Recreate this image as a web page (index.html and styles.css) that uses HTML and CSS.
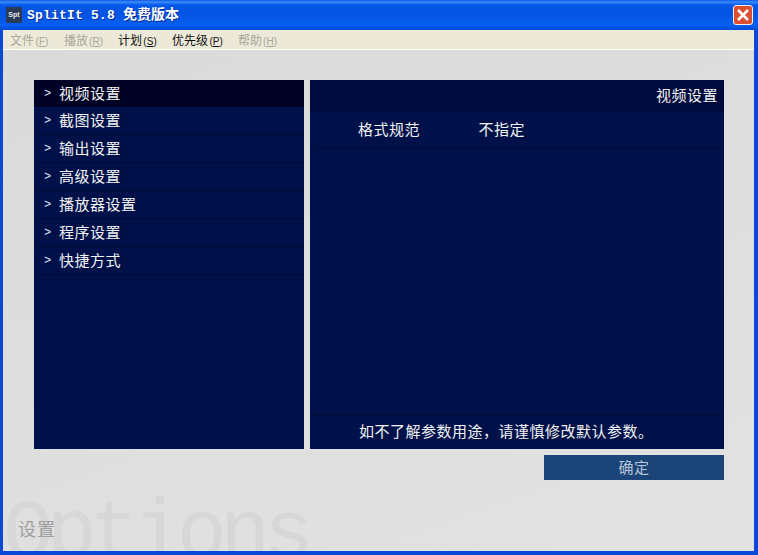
FILE: index.html
```html
<!DOCTYPE html>
<html lang="zh">
<head>
<meta charset="utf-8">
<title>SplitIt 5.8</title>
<link rel="stylesheet" href="styles.css">
</head>
<body>
<div class="window">
  <header class="titlebar">
    <div class="app-icon">Spt</div>
    <div class="title">SplitIt 5.8 <span class="title-cjk">免费版本</span></div>
    <button class="close" aria-label="关闭">
      <svg width="14" height="14" viewBox="0 0 14 14"><path d="M2 2 12 12M12 2 2 12" stroke="#fff" stroke-width="2.6" fill="none"/></svg>
    </button>
  </header>
  <div class="frame">
    <nav class="menubar">
      <span class="menu off">文件<span class="hot">(<u>F</u>)</span></span>
      <span class="menu off">播放<span class="hot">(<u>R</u>)</span></span>
      <span class="menu">计划<span class="hot">(<u>S</u>)</span></span>
      <span class="menu">优先级<span class="hot">(<u>P</u>)</span></span>
      <span class="menu off">帮助<span class="hot">(<u>H</u>)</span></span>
    </nav>
    <main class="client">
      <div class="watermark">Options</div>
      <div class="panels">
        <ul class="side">
          <li class="item active"><span class="arrow">&gt;</span>视频设置</li>
          <li class="item"><span class="arrow">&gt;</span>截图设置</li>
          <li class="item"><span class="arrow">&gt;</span>输出设置</li>
          <li class="item"><span class="arrow">&gt;</span>高级设置</li>
          <li class="item"><span class="arrow">&gt;</span>播放器设置</li>
          <li class="item"><span class="arrow">&gt;</span>程序设置</li>
          <li class="item"><span class="arrow">&gt;</span>快捷方式</li>
        </ul>
        <section class="detail">
          <div class="detail-head">视频设置</div>
          <div class="detail-row"><span class="key">格式规范</span><span>不指定</span></div>
          <div class="detail-body"></div>
          <div class="detail-foot">如不了解参数用途，请谨慎修改默认参数。</div>
        </section>
      </div>
      <div class="actions"><button class="ok">确定</button></div>
      <div class="caption">设置</div>
    </main>
  </div>
</div>
</body>
</html>
```
FILE: styles.css
```css
* { box-sizing: border-box; }
html, body { margin: 0; padding: 0; }
body { width: 758px; height: 555px; overflow: hidden; font-family: "Noto Sans CJK SC", "Liberation Sans", sans-serif; }
.window { width: 758px; height: 555px; display: flex; flex-direction: column; background: #0a49d8; }
.titlebar {
  height: 30px; flex: none; display: flex; align-items: center; padding: 0 5px 0 6px; gap: 5px;
  background: linear-gradient(#0a5ae6 0, #3a8cf8 2px, #0558ea 5px, #0353e4 14px, #0560f0 25px, #0449d4 30px);
}
.app-icon {
  width: 16px; height: 16px; background: #2b3b55; color: #e6e6e6;
  font: bold 7px/16px "Liberation Sans", sans-serif; text-align: center;
}
.title {
  flex: 1; color: #fff; font: bold 13px/18px "Liberation Mono", "Noto Sans CJK SC", monospace;
  letter-spacing: 0.2px; text-shadow: 1px 1px 0 #0a2c90; white-space: pre;
}
.title-cjk { font-size: 14px; letter-spacing: 0; }
.close {
  width: 20px; height: 20px; padding: 0; display: flex; align-items: center; justify-content: center;
  background: #d9502f; border: 1px solid #f2f2f2; border-radius: 3px;
}
.frame { flex: 1; min-height: 0; display: flex; flex-direction: column; margin: 0 4px 4px 3px; }
.menubar {
  height: 20px; flex: none; display: flex; padding-left: 7px; gap: 14px; background: #ece9d8;
  border-bottom: 1px solid #fff; font-size: 12px; line-height: 19px; color: #111;
}
.menu.off { color: #a8a69a; }
.hot { display: inline-block; width: 16px; text-align: center; font: 10px/19px "Liberation Sans", sans-serif; }
.client {
  flex: 1; position: relative; overflow: hidden; padding: 30px 30px 0 31px; display: flex; flex-direction: column;
  background: linear-gradient(160deg, #dadada, #e2e2e2);
}
.watermark {
  position: absolute; left: 0; top: 435px; font: 84px/100px "Liberation Mono", monospace;
  letter-spacing: -7px; color: #d7d7d7;
}
.panels { position: relative; display: flex; gap: 6px; height: 369px; flex: none; }
.side { width: 270px; margin: 0; padding: 0; list-style: none; background: #00114a; }
.item {
  height: 28px; display: flex; align-items: center; padding: 0 0 2px 10px; color: #f2f2f2; font-size: 15px;
  letter-spacing: 0.5px; border-bottom: 1px solid #000c36;
}
.item.active { height: 27px; background: #000225; border-bottom: 0; }
.arrow { width: 15px; font: 12px/16px "Liberation Mono", monospace; color: #dfe8ff; padding-top: 2px; }
.detail { flex: 1; display: flex; flex-direction: column; background: #00114a; color: #f2f2f2; font-size: 15px; letter-spacing: 0.5px; }
.detail-head { height: 32px; flex: none; background: #000a3c; text-align: right; padding-right: 6px; line-height: 30px; }
.detail-row {
  height: 36px; flex: none; display: flex; align-items: center; margin: 0 2px 0 8px; padding: 0 0 2px 40px;
  border-bottom: 1px solid #000c36;
}
.key { width: 120.5px; }
.detail-body { flex: 1; }
.detail-foot { height: 34px; flex: none; border-top: 1px solid #000c36; padding-left: 49px; line-height: 29px; }
.actions { position: relative; display: flex; justify-content: flex-end; margin-top: 6px; }
.ok {
  width: 180px; height: 25px; padding: 0 0 2px; border: 0; background: #1b4578; color: #b8c6d8;
  font: 15px/23px "Noto Sans CJK SC", sans-serif; letter-spacing: 0.5px;
}
.caption { position: relative; margin: 37px 0 0 -16px; font-size: 18px; line-height: 22px; letter-spacing: 1px; color: #a0a0a0; }
```
